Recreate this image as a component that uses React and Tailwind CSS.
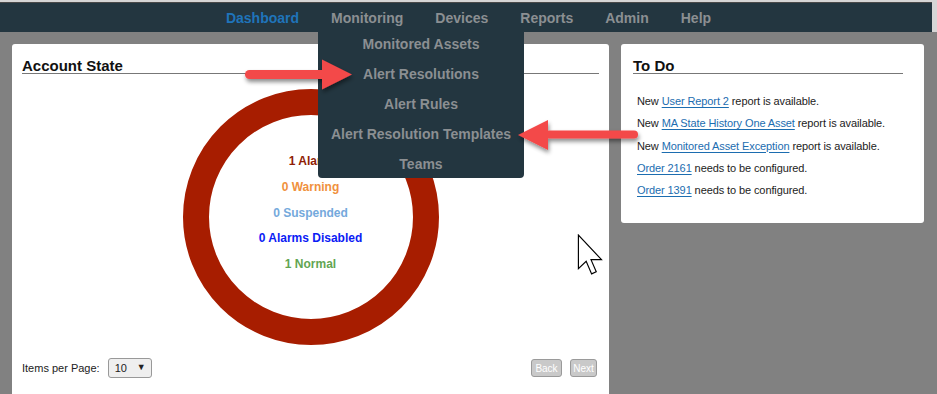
import React from 'react';

const navItems = ['Dashboard', 'Monitoring', 'Devices', 'Reports', 'Admin', 'Help'];
const menuItems = ['Monitored Assets', 'Alert Resolutions', 'Alert Rules', 'Alert Resolution Templates', 'Teams'];

const states = [
  { label: '1 Alarm', color: 'text-[#8f1d05]' },
  { label: '0 Warning', color: 'text-[#f0913d]' },
  { label: '0 Suspended', color: 'text-[#74a9dc]' },
  { label: '0 Alarms Disabled', color: 'text-[#0b1cf5]' },
  { label: '1 Normal', color: 'text-[#62a552]' },
];

const Link = ({ children }) => (
  <span className="text-[#1c6db0] underline underline-offset-2">{children}</span>
);

const App = () => {
  return (
    <div className="relative w-[937px] h-[394px] overflow-hidden bg-[#818181] font-['Liberation_Sans',Arial,sans-serif]">
      {/* top bar */}
      <div className="h-[2px] bg-[#d6d6d6]" />
      <div className="flex">
        <div className="flex-1">
          <div className="h-[1px] bg-[#4a4a4a]" />
          <nav className="h-[29px] bg-[#233640] flex items-center justify-center gap-8 pl-[5px] pt-[2px]">
            {navItems.map((item) => (
              <span
                key={item}
                className={`text-[14px] font-bold ${item === 'Dashboard' ? 'text-[#1f74ba]' : 'text-[#8b8f92]'}`}
              >
                {item}
              </span>
            ))}
          </nav>
        </div>
        <div className="w-[5px] bg-[#d6d6d6]" />
      </div>

      {/* panels */}
      <div className="flex gap-[12px] px-[12px] pt-[12px]">
        <div className="w-[597px] h-[360px] bg-white rounded-[3px] shrink-0 flex flex-col">
          <div className="px-[10px] pt-[14px]">
            <div className="text-[15px] leading-[15px] font-bold text-[#111] border-b border-[#777]">
              Account State
            </div>
          </div>
          <div className="flex justify-center mt-[15px]">
            <div className="w-[256px] h-[256px] rounded-full border-[26px] border-[#a71d00] flex flex-col items-center justify-center pb-[7px]">
              {states.map((s) => (
                <div key={s.label} className={`text-[12px] font-bold leading-[25.7px] ${s.color}`}>
                  {s.label}
                </div>
              ))}
            </div>
          </div>
          <div className="flex items-center justify-between pl-[10px] pr-[12px] mt-[13px]">
            <div className="flex items-center gap-[8px]">
              <span className="text-[11px] text-[#222]">Items per Page:</span>
              <div className="w-[44px] h-[20px] border border-[#999] rounded-[3px] bg-[#efefef] flex items-center justify-between pl-[6px] pr-[5px] text-[11px] text-[#222]">
                <span>10</span>
                <span className="text-[9px]">▼</span>
              </div>
            </div>
            <div className="flex items-center gap-[8px]">
              <div className="h-[18px] w-[31px] flex items-center justify-center text-[10px] text-white bg-[#c9c9c9] border border-[#9a9a9a] rounded-[3px]">
                Back
              </div>
              <div className="h-[18px] w-[27px] flex items-center justify-center text-[10px] text-white bg-[#c9c9c9] border border-[#9a9a9a] rounded-[3px]">
                Next
              </div>
            </div>
          </div>
        </div>

        <div className="w-[303px] h-[179px] bg-white rounded-[3px] shrink-0 px-[12px] pt-[14px]">
          <div className="w-[270px] text-[15px] leading-[15px] font-bold text-[#111] border-b border-[#777]">
            To Do
          </div>
          <div className="mt-[16px] pl-[4px] text-[11px] leading-[22.3px] tracking-[-0.1px] text-[#222]">
            <div>New <Link>User Report 2</Link> report is available.</div>
            <div>New <Link>MA State History One Asset</Link> report is available.</div>
            <div>New <Link>Monitored Asset Exception</Link> report is available.</div>
            <div><Link>Order 2161</Link> needs to be configured.</div>
            <div><Link>Order 1391</Link> needs to be configured.</div>
          </div>
        </div>
      </div>

      {/* Monitoring dropdown */}
      <div className="absolute left-[318px] top-[32px] w-[206px] h-[146px] bg-[#233640] rounded-b-[4px] overflow-hidden">
        <div className="-mt-[2px]">
          {menuItems.map((m) => (
            <div key={m} className="h-[29.8px] flex items-center justify-center text-[14px] font-bold text-[#8b8f92]">
              {m}
            </div>
          ))}
        </div>
      </div>

      {/* annotation arrows */}
      <svg className="absolute left-0 top-0 pointer-events-none" width="937" height="394">
        <defs>
          <filter id="sh" x="-20%" y="-50%" width="140%" height="200%">
            <feDropShadow dx="1" dy="3" stdDeviation="2" floodColor="#000" floodOpacity="0.45" />
          </filter>
        </defs>
        <g filter="url(#sh)" fill="#f34848">
          <rect x="245" y="70" width="82" height="9" rx="4.5" />
          <polygon points="322,59.5 352,74.5 322,89.5" />
          <rect x="545" y="130.5" width="93" height="8" rx="4" />
          <polygon points="548,120 518,135 548,150" />
        </g>
      </svg>

      {/* mouse cursor */}
      <svg className="absolute left-[577px] top-[234px]" width="28" height="42" viewBox="0 0 13 20">
        <path
          d="M0.5 0.5 L0.5 16.5 L4.2 13 L6.8 19 L9 18 L6.5 12.2 L11.5 12.2 Z"
          fill="#fff"
          stroke="#000"
          strokeWidth="0.55"
          strokeLinejoin="miter"
        />
      </svg>
    </div>
  );
};

export default App;
